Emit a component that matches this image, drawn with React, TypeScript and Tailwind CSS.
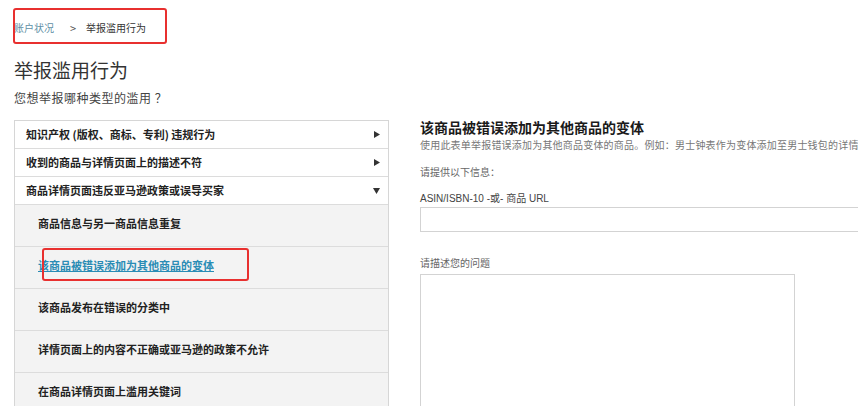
import React from "react";

const RightTri = () => (
  <svg width="6" height="7" viewBox="0 0 6 7" className="shrink-0">
    <path d="M0 0 L6 3.5 L0 7 Z" fill="#333" />
  </svg>
);
const DownTri = () => (
  <svg width="7" height="6" viewBox="0 0 7 6" className="shrink-0">
    <path d="M0 0 L7 0 L3.5 6 Z" fill="#333" />
  </svg>
);

const subItems = [
  { t: "商品信息与另一商品信息重复", active: false },
  { t: "该商品被错误添加为其他商品的变体", active: true },
  { t: "该商品发布在错误的分类中", active: false },
  { t: "详情页面上的内容不正确或亚马逊的政策不允许", active: false },
  { t: "在商品详情页面上滥用关键词", active: false },
];

export default function App() {
  const font = "font-['Noto_Sans_CJK_SC','Noto_Sans',sans-serif]";
  return (
    <div className={`relative w-[858px] h-[406px] overflow-hidden bg-white ${font}`}>
      <div className="pl-[14px] pt-[20px]">
        {/* breadcrumb */}
        <div className="flex h-[16px] items-center text-[10px] leading-[16px]">
          <span className="text-[#5f8fa6]">账户状况</span>
          <span className="ml-[16px] mr-[10px] text-[11px] text-[#555]">&gt;</span>
          <span className="text-[#333]">举报滥用行为</span>
        </div>
        {/* title */}
        <div className="mt-[22px] text-[19px] leading-[24px] text-[#333]">举报滥用行为</div>
        <div className="mt-[8px] text-[12px] leading-[16px] tracking-[0.5px] text-[#444]">您想举报哪种类型的滥用 ？</div>

        <div className="mt-[12px] flex">
          {/* left list */}
          <div className="mt-[2px] w-[375px] shrink-0 border border-[#d6d6d6]">
            <div className="flex h-[28px] items-center justify-between border-b border-[#dcdcdc] bg-white pl-[11px] pr-[8px]">
              <span className="text-[11px] font-bold text-[#222]">知识产权 (版权、商标、专利) 违规行为</span>
              <RightTri />
            </div>
            <div className="flex h-[28px] items-center justify-between border-b border-[#dcdcdc] bg-white pl-[11px] pr-[8px]">
              <span className="text-[11px] font-bold text-[#222]">收到的商品与详情页面上的描述不符</span>
              <RightTri />
            </div>
            <div className="flex h-[28px] items-center justify-between border-b border-[#dcdcdc] bg-white pl-[11px] pr-[8px]">
              <span className="text-[11px] font-bold text-[#222]">商品详情页面违反亚马逊政策或误导买家</span>
              <DownTri />
            </div>
            {subItems.map((s) => (
              <div
                key={s.t}
                className="h-[42px] border-b border-[#dcdcdc] bg-[#f3f3f3] pl-[23px] pt-[11px] text-[11px] leading-[14px]"
              >
                {s.active ? (
                  <span className="font-bold text-[#2a8cb5] underline">{s.t}</span>
                ) : (
                  <span className="font-bold text-[#222]">{s.t}</span>
                )}
              </div>
            ))}
          </div>

          {/* right column */}
          <div className="ml-[31px] flex min-w-0 flex-col">
            <div className="text-[14px] leading-[18px] font-bold text-[#1a1a1a] whitespace-nowrap">该商品被错误添加为其他商品的变体</div>
            <div className="mt-[2px] text-[10px] leading-[14px] tracking-[0.2px] text-[#777] whitespace-nowrap">
              使用此表单举报错误添加为其他商品变体的商品。例如：男士钟表作为变体添加至男士钱包的详情页
            </div>
            <div className="mt-[13px] text-[10px] leading-[14px] text-[#666]">请提供以下信息：</div>
            <div className="mt-[13px] text-[10px] leading-[14px] text-[#444] font-['Liberation_Sans','Noto_Sans_CJK_SC',sans-serif]">ASIN/ISBN-10 -或- 商品 URL</div>
            <div className="mt-[1px] h-[25px] w-[480px] border border-[#d3d3d3] bg-white" />
            <div className="mt-[24px] text-[10px] leading-[14px] text-[#666]">请描述您的问题</div>
            <div className="mt-[4px] h-[160px] w-[375px] border border-[#d3d3d3] bg-white" />
          </div>
        </div>
      </div>

      {/* annotation boxes */}
      <div className="absolute left-[13px] top-[8px] h-[36px] w-[154px] rounded-[3px] border-2 border-[#e8302f]" />
      <div className="absolute left-[42px] top-[248px] h-[33px] w-[207px] rounded-[3px] border-2 border-[#e8302f]" />
    </div>
  );
}
